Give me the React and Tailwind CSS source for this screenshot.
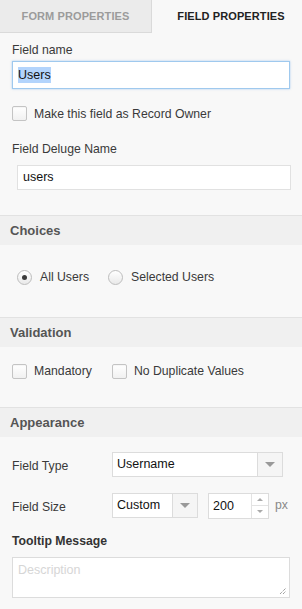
const font = { fontFamily: '"Liberation Sans", Arial, sans-serif' };

function Checkbox() {
    return <span className="inline-block w-[15px] h-[15px] rounded-[2px] border border-[#c4c4c4] bg-gradient-to-b from-white to-[#f1f1f1] shadow-[inset_0_1px_1px_rgba(0,0,0,0.04)]" />;
}

function Radio({ checked }) {
    return (
        <span className="inline-flex items-center justify-center w-[15px] h-[15px] rounded-full border border-[#bdbdbd] bg-gradient-to-b from-white to-[#e9e9e9]">
            {checked && <span className="w-[5px] h-[5px] rounded-full bg-[#3a3a3a]" />}
        </span>
    );
}

function SectionHeader({ title }) {
    return (
        <div className="h-[30px] border-t border-[#e2e2e2] bg-[#f0f0f0] flex items-center px-[10px] text-[13px] font-bold text-[#555]">
            {title}
        </div>
    );
}

function Caret() {
    return <span className="w-0 h-0 border-l-[5px] border-r-[5px] border-t-[5px] border-l-transparent border-r-transparent border-t-[#999]" />;
}

export default function App() {
    return (
        <div style={font} className="w-[302px] h-[609px] overflow-hidden bg-[#f8f8f8] text-[12.25px] text-[#333]">
            {/* Tabs */}
            <div className="flex h-[33px]">
                <div className="w-[152px] bg-[#ebebeb] border-r border-b border-[#dadada] flex items-center justify-center text-[11px] font-bold text-[#9b9b9b] tracking-[0.1px]">
                    FORM PROPERTIES
                </div>
                <div className="flex-1 flex items-center justify-center pl-[8px] text-[11px] font-bold text-[#222] tracking-[0.1px]">
                    FIELD PROPERTIES
                </div>
            </div>

            {/* Basic */}
            <div className="px-3 pt-[10px] pb-[25px]">
                <div className="leading-[14px] text-[#3a3a3a]">Field name</div>
                <div className="mt-[4px] h-[28px] bg-white border border-[#9fc9ee] shadow-[0_0_2px_rgba(90,160,230,0.5)] flex items-center px-[5px] text-[12.5px] text-[#111]">
                    <span className="bg-[#b3d4fc] leading-[16px]">Users</span>
                </div>
                <div className="mt-[17px] flex items-center gap-[7px] text-[#3a3a3a]">
                    <Checkbox />
                    <span className="leading-[14px]">Make this field as Record Owner</span>
                </div>
                <div className="mt-[21px] leading-[14px] text-[#3a3a3a]">Field Deluge Name</div>
                <div className="mt-[9px] ml-[5px] mr-[-1px] h-[25px] bg-white border border-[#e1e1e1] flex items-center px-[5px] text-[12.5px] text-[#111]">
                    users
                </div>
            </div>

            <SectionHeader title="Choices" />
            <div className="h-[72px] flex items-start pt-[25px] pl-[17px] text-[#3a3a3a]">
                <Radio checked />
                <span className="ml-[8px] leading-[15px]">All Users</span>
                <span className="ml-[19px] flex"><Radio /></span>
                <span className="ml-[8px] leading-[15px]">Selected Users</span>
            </div>

            <SectionHeader title="Validation" />
            <div className="h-[60px] flex items-start pt-[15px] pl-[12px] text-[#3a3a3a]">
                <div className="flex items-center gap-[7px]">
                    <Checkbox />
                    <span>Mandatory</span>
                </div>
                <div className="ml-[20px] flex items-center gap-[7px]">
                    <Checkbox />
                    <span>No Duplicate Values</span>
                </div>
            </div>

            <SectionHeader title="Appearance" />
            <div className="px-3 pt-[15px]">
                <div className="flex items-center h-[25px]">
                    <span className="w-[100px] text-[#3a3a3a] mt-[4px]">Field Type</span>
                    <div className="w-[171px] h-[25px] bg-white border border-[#dcdcdc] flex">
                        <span className="flex-1 flex items-center pl-[4px] text-[12.5px] text-[#111]">Username</span>
                        <span className="w-[25px] border-l border-[#dcdcdc] bg-[#f5f5f5] flex items-center justify-center"><Caret /></span>
                    </div>
                </div>
                <div className="mt-[16px] flex items-center h-[25px]">
                    <span className="w-[100px] text-[#3a3a3a] mt-[4px]">Field Size</span>
                    <div className="w-[86px] h-[25px] bg-white border border-[#dcdcdc] flex">
                        <span className="flex-1 flex items-center pl-[4px] text-[12.5px] text-[#111]">Custom</span>
                        <span className="w-[25px] border-l border-[#dcdcdc] bg-[#f5f5f5] flex items-center justify-center"><Caret /></span>
                    </div>
                    <div className="ml-[10px] w-[61px] h-[26px] bg-white border border-[#dcdcdc] flex">
                        <span className="flex-1 flex items-center pl-[4px] pt-[2px] text-[12.5px] text-[#111]">200</span>
                        <span className="w-[17px] border-l border-[#e3e3e3] flex flex-col">
                            <span className="flex-1 flex items-center justify-center border-b border-[#e3e3e3]">
                                <span className="w-0 h-0 border-l-[3px] border-r-[3px] border-b-[3px] border-l-transparent border-r-transparent border-b-[#aaa]" />
                            </span>
                            <span className="flex-1 flex items-center justify-center">
                                <span className="w-0 h-0 border-l-[3px] border-r-[3px] border-t-[3px] border-l-transparent border-r-transparent border-t-[#aaa]" />
                            </span>
                        </span>
                    </div>
                    <span className="ml-[6px] text-[#888]">px</span>
                </div>
                <div className="mt-[16px] font-bold text-[#333] leading-[14px]">Tooltip Message</div>
                <div className="relative mt-[9px] h-[41px] bg-white border border-[#dcdcdc] px-[5px] pt-[5px] text-[12.5px] text-[#d6d6d6] leading-[14px]">
                    Description
                    <svg className="absolute right-[2px] bottom-[2px]" width="8" height="8" viewBox="0 0 8 8">
                        <path d="M1 7 L7 1 M4 7 L7 4" stroke="#777" strokeWidth="1" strokeDasharray="1 1" />
                    </svg>
                </div>
            </div>
        </div>
    );
}
